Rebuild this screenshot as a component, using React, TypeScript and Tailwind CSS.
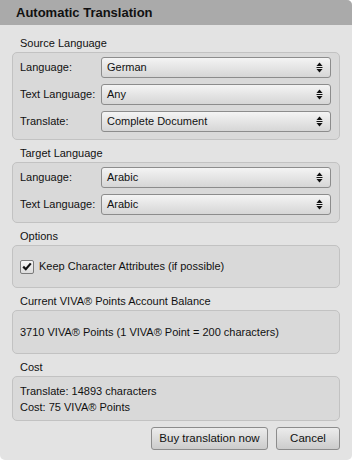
import type { ReactNode } from "react";

const font = { fontFamily: '"Liberation Sans", Arial, sans-serif' };

function Arrows() {
  return (
    <svg width="7" height="11" viewBox="0 0 7 11" className="shrink-0">
      <path d="M3.5 0.5 L6.5 4 H0.5 Z" fill="#111" />
      <rect x="0.5" y="5" width="6" height="1" fill="#111" />
      <path d="M3.5 10.5 L6.5 7 H0.5 Z" fill="#111" />
    </svg>
  );
}

function Select({ value }: { value: string }) {
  return (
    <div className="flex h-[21px] w-[230px] items-center justify-between rounded-[3px] border border-[#8c8c8c] bg-gradient-to-b from-[#f4f4f4] to-[#d6d6d6] pl-[5px] pr-[7px] text-[#111]">
      <span>{value}</span>
      <Arrows />
    </div>
  );
}

function Row({ label, value }: { label: string; value: string }) {
  return (
    <div className="flex items-center">
      <span className="w-[81px]">{label}</span>
      <Select value={value} />
    </div>
  );
}

function Group({ title, children, className }: { title: string; children: ReactNode; className: string }) {
  return (
    <div>
      <div className="h-[18px] pl-[8px] leading-[18px]">{title}</div>
      <div className={`rounded-[5px] border border-[#c2c2c2] bg-[#d9d9d9] px-[7px] ${className}`}>{children}</div>
    </div>
  );
}

export default function App() {
  return (
    <div className="h-[460px] w-[352px] overflow-hidden rounded-tr-[5px] rounded-b-[5px] bg-[#e3e3e3] text-[11px] text-[#111]" style={font}>
      <div className="flex h-[25px] items-center bg-[#aaaaaa] pl-[16px] text-[13px] font-bold text-[#111]">
        Automatic Translation
      </div>
      <div className="flex flex-col gap-[4px] px-[12px] pt-[9px]">
        <Group title="Source Language" className="flex flex-col gap-[6px] pb-[7px] pt-[4px]">
          <Row label="Language:" value="German" />
          <Row label="Text Language:" value="Any" />
          <Row label="Translate:" value="Complete Document" />
        </Group>
        <Group title="Target Language" className="flex flex-col gap-[6px] pb-[7px] pt-[4px]">
          <Row label="Language:" value="Arabic" />
          <Row label="Text Language:" value="Arabic" />
        </Group>
        <Group title="Options" className="flex h-[43px] items-center">
          <div className="flex items-center gap-[5px]">
            <div className="flex h-[14px] w-[14px] items-center justify-center rounded-[2px] border border-[#7a7a7a] bg-gradient-to-b from-[#f6f6f6] to-[#dcdcdc]">
              <svg width="10" height="9" viewBox="0 0 10 9">
                <path d="M1.2 4.6 L3.8 7.2 L8.8 1.4" fill="none" stroke="#111" strokeWidth="2.2" />
              </svg>
            </div>
            <span>Keep Character Attributes (if possible)</span>
          </div>
        </Group>
        <Group title="Current VIVA® Points Account Balance" className="flex h-[44px] items-center">
          <span>3710 VIVA® Points (1 VIVA® Point = 200 characters)</span>
        </Group>
        <Group title="Cost" className="flex h-[45px] flex-col justify-center leading-[16px]">
          <span>Translate: 14893 characters</span>
          <span>Cost: 75 VIVA® Points</span>
        </Group>
      </div>
      <div className="flex justify-end gap-[8px] px-[12px] pt-[6px]">
        <button className="h-[23px] w-[117px] rounded-[3px] border border-[#8c8c8c] bg-gradient-to-b from-[#ececec] to-[#cccccc] text-[11.5px] text-[#111]">
          Buy translation now
        </button>
        <button className="h-[23px] w-[64px] rounded-[3px] border border-[#8c8c8c] bg-gradient-to-b from-[#ececec] to-[#cccccc] text-[11.5px] text-[#111]">
          Cancel
        </button>
      </div>
    </div>
  );
}
